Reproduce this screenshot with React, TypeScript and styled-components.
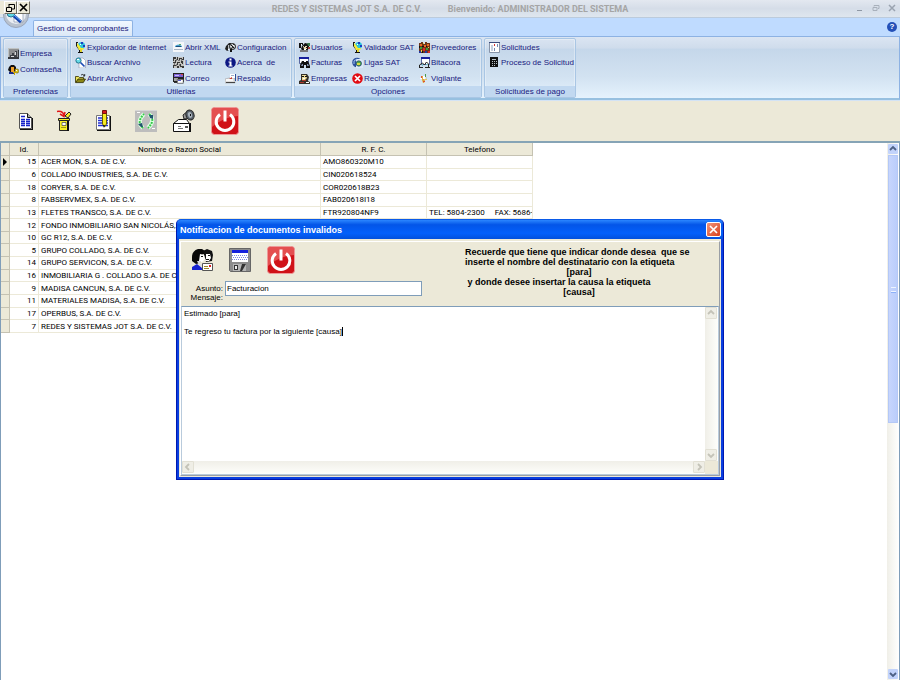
import React, { useState } from "react";
import styled, { createGlobalStyle } from "styled-components";

const Global = createGlobalStyle`
  *, *::before, *::after { box-sizing: border-box; }
  body { margin: 0; background: #fff; font-family: "Liberation Sans", Arial, sans-serif; font-size: 8px; color: #000; }
  button { font: inherit; color: inherit; padding: 0; border: 0; background: none; cursor: default; }
  svg { display: block; flex: none; }
`;

/* ---------- icons ---------- */

const Svg = ({ size = 11, box = 11, children }: { size?: number; box?: number; children: React.ReactNode }) => (
  <svg width={size} height={size} viewBox={`0 0 ${box} ${box}`} aria-hidden="true">{children}</svg>
);

const icons: Record<string, React.ReactNode> = {
  empresa: <>
    <path fill="#8d8f90" d="M0 0h11v11H0z" /><path fill="#bfc2c2" d="M0 0h11v1H1v9H0z" />
    <path fill="#33373c" d="M1 9h9V2h1v9H0V9z" /><path fill="#3e4247" d="M2 7h2V5h2v2h1V3h2v6H2z" />
    <path fill="#d9dbdb" d="M3 8h3v1H3zM7 4h1v3H7z" />
  </>,
  clave: <>
    <path fill="#111" d="M1 3l2-2h3l2 2v3L6 8H2L0 6z" /><path fill="#f0a028" d="M3 3h3v5H3z" />
    <path fill="#1f2f88" d="M1 8h5v2H1z" /><path fill="#d9c01c" stroke="#5b4d00" strokeWidth=".5" d="M7 5h3l1 2-1 2H8L7 8z" />
    <path fill="#fff" d="M8 6h1v1H8z" /><path fill="#c8a800" d="M5 8h3v1H7v2H6V9H5z" />
  </>,
  globo: <>
    <circle cx="6.500" cy="3.600" r="3.500" fill="#2fc4dc" /><path fill="#1c3fc0" d="M6 0h2v2H6zM8 3h2v2H8z" />
    <path fill="#1a1a1a" d="M1 0h2v1H2v3l3 4H4L1 4z" /><path fill="#f5ec35" d="M2 1l2 2 2 3 3 0-1 2H4L2 4z" />
    <path fill="#fff" d="M5 2h1v1H5z" /><path fill="#111" d="M4 8h3v2h1v1H3v-1h1z" /><path fill="#e4d42c" d="M5 7h2v3H5z" />
  </>,
  buscar: <>
    <path fill="#fff" stroke="#8b96ac" strokeWidth=".6" d="M4 1h4l2.500 2.500V11H4z" />
    <circle cx="3.500" cy="3.500" r="2.600" fill="#66dbe8" stroke="#23738c" /><path stroke="#1b4cb4" strokeWidth="1.700" d="M5.500 5.500l4 4" />
    <path fill="#fff" d="M2 2h2v1H2z" />
  </>,
  abrir: <>
    <path fill="#ebe45b" stroke="#333000" strokeWidth=".8" d="M.5 9.500v-6h3l1 1h4v2" />
    <path fill="#8b8614" stroke="#2a2800" strokeWidth=".8" d="M.7 9.600L3 6h7.500L8.300 9.600z" />
    <path fill="none" stroke="#111" strokeWidth=".8" d="M6 2q2-1.500 3.500.8M9.700 1v2H8" />
  </>,
  xml: <>
    <path fill="#f5f7fa" d="M0 0h11v10H0z" /><path fill="#4aa0cf" d="M2 4q3-3 7 0v1H2z" />
    <path fill="#1c4d78" d="M3 4h5v1H3z" /><path fill="#5cb26a" d="M6 2h2v1H6z" /><path fill="#a7b5c4" d="M1 7h9v1H1z" />
  </>,
  lectura: <>
    <path fill="#c4c4c0" d="M0 0h11v11H0z" />
    <path fill="#383838" d="M0 0h3v2H1v2H0zM4 0h1v3H4zM6 1h3v1H7v2H6zM10 0h1v3h-2V2h1zM2 3h1v3H0V5h2zM4 5h3v1H5v2H4zM8 4h2v3H9V6H8zM0 8h3v1H1v2H0zM4 9h2v2H4zM7 7h1v2h3v1H7zM9 10h2v1H9z" />
    <path fill="#777" d="M3 2h1v2H3zM5 3h2v1H5zM3 7h1v2H3zM6 7h1v2H6zM1 6h1v2H1zM8 2h1v2H8z" />
  </>,
  correo: <>
    <path fill="#222" d="M0 0h11v9H0z" /><path fill="#7b60d3" d="M1 1h9v3H1z" /><path fill="#c9bdf2" d="M2 2h4v1H2z" />
    <path fill="#a3a3a3" d="M1 5h4v3H1z" /><path fill="#e04848" d="M8 1h2v1H8z" /><path fill="#fff" stroke="#222" strokeWidth=".6" d="M4.300 6.300h6v4h-6z" />
    <path fill="#5a5ed0" d="M5 7h3v1H5z" /><path fill="#333" d="M1 9h3v1H1z" />
  </>,
  config: <>
    <path fill="#222" d="M1 4l3-3h2v2H4v5L2 9 0 7z" /><path fill="#b8bcc0" d="M3 3h2v4H3z" />
    <circle cx="7.500" cy="4.500" r="3" fill="#d4d7da" stroke="#111" /><path stroke="#111" d="M6 3l3 3M9 2L6 8" />
    <path fill="#111" d="M5 7h2v3H5z" /><path fill="#fff" d="M8 3h1v1H8zM3 7h1v1H3z" />
  </>,
  info: <>
    <circle cx="5.500" cy="5.500" r="5.300" fill="#0c1783" /><path fill="#fff" d="M4.500 1.500h2v2h-2zM3.500 4.500h3v4h1v1h-4v-1h1v-3h-1z" />
  </>,
  respaldo: <>
    <path fill="#dedede" stroke="#9a9a9a" strokeWidth=".5" d="M0 6l4-1 6 0v5H0z" /><path fill="#f9f9f9" d="M1 6h7v2H1z" />
    <path fill="#444" d="M1 9h9v1H1z" /><path fill="#2b4d9b" d="M10 1h1v7h-1z" /><path fill="#fff" d="M5 1h5v4H5z" />
    <path fill="#c43b31" d="M4 6l3-2v2z" /><path fill="#9db0ca" d="M6 2h3v1H6z" />
  </>,
  usuarios: <>
    <path fill="#111" d="M0 1h4v2H2v3H0zM6 1l4 1v4L8 9H4L2 7l1-3z" /><path fill="#e7d8b0" d="M4 4h4v3H5z" />
    <path fill="#111" d="M5 4h1v1H5zM7 5h1v1H7z" /><path fill="#397a4c" d="M8 1h3v3H9z" /><path fill="#a83a35" d="M9 5h2v2H9z" />
    <path fill="#777" d="M1 8h8v2H1z" /><path fill="#fff" d="M2 2h1v1H2zM5 7h2v1H5z" />
  </>,
  facturas: <>
    <path fill="#fff" stroke="#34448b" strokeWidth=".8" d="M.5.5h9v6h-9z" /><path fill="#17209b" d="M0 0h10v2H0z" />
    <path fill="#111" d="M3 4h2v1h2V4h2l2 5v2H7V8H5v3H1V8z" /><path fill="#8391af" d="M3 7h1v2H2zM8 7h1l1 2H8z" />
  </>,
  empresas: <>
    <path fill="#343029" d="M2 1h6l2 3-1 4 2 1v2H0V8l2-1z" /><path fill="#eddb98" d="M3 2h4l1 3-2 2H3z" />
    <path fill="#111" d="M3 3h2v1H3zM6 3h2v1H6z" /><path fill="#ac392e" d="M3 7h4v1H3zM1 9h4v1H1z" /><path fill="#fff" d="M7 9h3v1H7zM4 5h2v1H4z" />
  </>,
  ligas: <>
    <circle cx="5" cy="5.500" r="4.800" fill="#2d519e" /><path fill="#dce9f8" d="M4 2h5l2 2v7H4z" />
    <circle cx="6.800" cy="6.500" r="2.700" fill="#55a64b" stroke="#18396f" strokeWidth=".7" /><path fill="#d8dc44" d="M5 6h3v2H5z" />
    <path fill="none" stroke="#9fc2ec" d="M2 7V4l3-2" />
  </>,
  rechazo: <>
    <circle cx="5.500" cy="5.500" r="5.300" fill="#e20c12" /><path stroke="#fff" strokeWidth="1.700" d="M3 3l5 5M8 3L3 8" />
  </>,
  proveedores: <>
    <path fill="#6d3519" d="M0 1h2V0h2v2h2V0h2v1h3v10H0z" /><path fill="#e96a26" d="M1 2h2v2H1zM5 3h2v2H5zM8 2h2v2H8z" />
    <path fill="#37a13d" d="M1 5h2v2H1zM7 6h2v2H7z" /><path fill="#dc2828" d="M4 6h2v3H4zM9 9h2v2H9z" />
    <path fill="#f1d24c" d="M2 8h1v2H2zM4 1h1v1H4zM9 5h1v1H9z" /><path fill="#2436a0" d="M0 9h2v2H0zM6 9h2v2H6z" /><path fill="#111" d="M3 4h2v1H3zM3 9h1v2H3zM7 4h1v1H7zM0 4h1v2H0z" />
  </>,
  bitacora: <>
    <path fill="#fff" stroke="#34448b" strokeWidth=".8" d="M2.500.5h8v7h-8z" /><path fill="#17209b" d="M2 0h9v2H2z" />
    <path fill="none" stroke="#222" d="M.5 10V8l3-2 2 2 2-3 2 2v3M0 10.500h4M6 10.500h5" /><path fill="#74c4cf" d="M3 7h1v2H3zM7 7h2v1H7z" />
  </>,
  vigilante: <>
    <path fill="#e0a83a" d="M3 3h1l1 2 1 3-1 2H4L3 7z" /><path fill="#dc4e33" d="M2 3h1v2H2zM4 8h2v1H4z" />
    <path fill="#fff" d="M4 3h2v3H4zM1 5h2v1H1z" /><path fill="#4c9a4d" d="M6 1h1v3H6z" /><path fill="#e8c85a" d="M6 6h2v1H6z" /><path fill="#c9ccd0" d="M7 4h1v2H7z" />
  </>,
  solicitudes: <>
    <path fill="#fff" stroke="#707c94" strokeWidth=".8" d="M.5.5h10v10H.5z" /><path fill="#3a4b7c" d="M0 0h11v1H0z" />
    <path fill="#c7d0df" d="M2 3h2v6H2z" /><path fill="#d12f2f" d="M5 2h1v2H5z" /><path fill="#7489b4" d="M8 2h1v3H8zM5 6h1v3H5z" />
  </>,
  proceso: <>
    <path fill="#111" d="M1 0h8v10H1z" /><path fill="#b9c1c7" d="M3 2h4v1H3zM3 4h1v1H3zM5 4h1v1H5zM7 4h1v1H7zM3 6h1v1H3zM5 6h1v1H5zM7 6h1v1H7zM3 8h1v1H3zM5 8h1v1H5z" />
  </>,
};

const DocIcon = () => (
  <Svg size={20} box={20}>
    <path fill="#111" d="M4 19v-1h12V7h1v12z" /><path fill="#fff" stroke="#555" d="M3.500 2.500h8l4 4v11h-12z" />
    <path fill="#aaa" stroke="#111" d="M11.500 2.500v4h4" />
    <path stroke="#1420c8" strokeWidth="1.400" d="M5 5.500h4M5 8.500h4m1 0h4M5 10.500h4m1 0h4M5 12.500h4m1 0h4M5 14.500h4m1 0h4" />
  </Svg>
);
const TrashIcon = () => (
  <Svg size={22} box={22}>
    <path fill="none" stroke="#e11616" strokeWidth="1.500" d="M2 1.500q6-1 7 4M5 4l4 2.500L10 2" />
    <path fill="#f8ef26" stroke="#222" d="M10 6l4-4 2 2-3 4zM3.500 8.500h11v2h-11zM4.500 10.500h9v10h-9z" />
    <path fill="#fff" stroke="#444" strokeWidth=".7" d="M7 12.500h4v3H7z" /><path fill="#111" d="M12 11h2v10h-2z" /><path fill="#a29b16" d="M6 17h5v1H6z" />
  </Svg>
);
const PencilDocIcon = () => (
  <Svg size={22} box={22}>
    <path fill="#111" d="M4 21v-1h13V6h1v15z" /><path fill="#fff" stroke="#777" d="M3.500 5.500h13v14h-13z" />
    <path stroke="#222fd0" strokeWidth="1.300" d="M5 8h10M5 10.500h10M5 13h10M5 15.500h10" />
    <path fill="#f6ea22" stroke="#665f00" d="M9.500 3h4v11l-2 3-2-3z" /><path fill="#d81a1a" stroke="#711" d="M9.500.5h4v3h-4z" /><path fill="#111" d="M10 15h2l-1 3z" />
  </Svg>
);
const RecycleIcon = () => (
  <Svg size={22} box={22}>
    <path fill="#bdbdbd" d="M0 0h22v22H0z" /><path fill="#d7d7d7" d="M0 0h22v1H0z" />
    <path fill="none" stroke="#dfffe2" strokeWidth="4" d="M8 18q-7-6 1-14M14 4q7 6-1 14" />
    <path fill="none" stroke="#34c948" strokeWidth="2" strokeDasharray="2 1" d="M8 18q-7-6 1-14M14 4q7 6-1 14" />
    <path fill="#22566e" d="M3 14l4-1 1 4H6zM14 5l4 0 0 4-3-1z" /><path fill="#fff" d="M2 2h3v1H2zM17 18h3v1h-3z" />
  </Svg>
);
const HornIcon = () => (
  <Svg size={24} box={24}>
    <path fill="#fff" stroke="#111" d="M1.500 14.500l5-4h8l3 4v8h-16zM1.500 14.500h16" /><path fill="#111" d="M18 14h1v9H3v-1h15z" />
    <path fill="#555" d="M13 17h3v2h-3z" /><path stroke="#777" d="M6 19.500h5M6 17.500h3" />
    <path fill="#999" stroke="#222" d="M11 6l5-4 4 7-8 1z" /><ellipse cx="18" cy="6" rx="4" ry="5" transform="rotate(-20 18 6)" fill="#59626b" stroke="#222" />
    <ellipse cx="18" cy="6" rx="2" ry="3" fill="#a7b1bb" transform="rotate(-20 18 6)" /><path fill="#111" d="M18 5h1v2h-1z" />
  </Svg>
);
const PowerIcon = () => (
  <Svg size={28} box={28}>
    <rect x=".5" y=".5" width="27" height="27" rx="3" fill="#d01218" stroke="#e99" />
    <path fill="#ec6a68" opacity=".7" d="M1 3q0-2 2-2h22q2 0 2 2v6Q12 10 1 20z" />
    <path fill="none" stroke="#fff" strokeWidth="3" d="M9 7.500a8.800 8.800 0 1 0 10 0" /><path stroke="#fff" strokeWidth="3" d="M14 3.500v11" />
  </Svg>
);
const FacesIcon = () => (
  <Svg size={24} box={24}>
    <path fill="#090909" d="M1 9q0-6 6-8h4l3 2-1 3-3 1-1 8-4 1-4-3z" /><path fill="#111" d="M12 3l4-2 5 2 1 4-1 6-6 1z" />
    <path fill="#fff" d="M9 6l4 1 1 4-3 3-3-1zM15 6h4l1 4-2 3h-4l1-3z" /><path fill="#ddd" d="M6 13h3v3l3 1-3 2z" />
    <path fill="#111" d="M10 8h2v1h-2zM17 7h2v1h-2zM15 11h3v1h-3z" /><path fill="#1622d0" d="M1 19l5-3 5 4v2H1z" />
    <path fill="#fff" stroke="#555" d="M11.500 15.500h10v7h-10z" /><path fill="#d22" d="M18 17h2v2h-2z" /><path stroke="#a08a28" d="M13 18.500h4M13 20.500h5" />
  </Svg>
);
const FloppyIcon = () => (
  <Svg size={24} box={24}>
    <path fill="#8c8c8c" stroke="#666" d="M1.500.5h21v23h-20l-1-1z" /><path fill="#fff" d="M4 2h16v12H4z" /><path fill="#1420dc" d="M4 2h16v3H4z" />
    <path stroke="#7d87e0" strokeDasharray="1 1" d="M4 7.500h16M5 9.500h15M4 11.500h16" /><path fill="#b6b6b6" d="M5 16h13v7H5z" />
    <path fill="#333" d="M6 17h4v5H6zM14 16h4l-4 7h-2z" /><path fill="#efefef" d="M7 18h2v3H7z" />
  </Svg>
);
const OrbArt = () => (
  <svg width="26" height="26" viewBox="0 0 26 26" aria-hidden="true">
    <circle cx="13" cy="13" r="12.500" fill="#b9c2cf" stroke="#9aa6ba" /><circle cx="13" cy="12" r="10" fill="#e9edf3" />
    <path fill="#fff" stroke="#8a97ae" strokeWidth=".7" d="M11 6h7l2 2v12h-9z" />
    <circle cx="8" cy="11" r="4" fill="#5fd9e5" stroke="#287a96" /><path stroke="#1545b0" strokeWidth="3" d="M11 14l7 6" /><path stroke="#77b7ff" d="M11 13l7 6" />
  </svg>
);
const Chevron = ({ dir, color }: { dir: "up" | "down" | "left" | "right"; color: string }) => {
  const d = { up: "M1 5l3-3 3 3", down: "M1 3l3 3 3-3", left: "M5 1L2 4l3 3", right: "M3 1l3 3-3 3" }[dir];
  return <svg width="8" height="8" viewBox="0 0 8 8" aria-hidden="true"><path d={d} fill="none" stroke={color} strokeWidth="1.800" /></svg>;
};

/* ---------- shell ---------- */

const Shell = styled.div`
  min-height: 100vh; display: flex; flex-direction: column; position: relative;
`;
const TitleBar = styled.header`
  height: 18px; flex: none; display: flex; align-items: center; justify-content: center; gap: 26px;
  position: relative;
  background: linear-gradient(#e3e8f0, #d5dde8 50%, #dfe6ee); border-bottom: 1px solid #bccbdc;
  font-family: Roboto, sans-serif; font-size: 9px; font-weight: 700; color: #a5a5a5; white-space: pre;
`;
const Caption = styled.span``;
const WindowButtons = styled.div`
  position: absolute; right: 3px; top: 3px; display: flex; gap: 6px;
  button { width: 10px; height: 10px; }
`;
const Orb = styled.button`
  position: absolute; left: 3px; top: 2px; z-index: 2; width: 26px; height: 26px;
`;
const MdiButtons = styled.div`
  position: absolute; left: 0; top: 1px; z-index: 3; display: flex; padding-left: 4px; background: #ece9d8;
`;
const MdiButton = styled.button`
  width: 13px; height: 13px; display: grid; place-items: center; background: #ece9d8;
  border: 1px solid; border-color: #fff #716f64 #716f64 #fff;
`;
const TabRow = styled.nav`
  height: 18px; flex: none; display: flex; align-items: flex-end; justify-content: space-between;
  padding: 0 3px 0 33px; background: #bfdbff;
`;
const Tab = styled.button`
  height: 16px; padding: 0 3px; background: linear-gradient(#f0f7ff, #dce8f6);
  border: 1px solid #8db2e3; border-bottom: 0; border-radius: 2px 2px 0 0; color: #1a1a80;
`;
const HelpButton = styled.button`
  width: 10px; height: 10px; margin-bottom: 4px; border-radius: 50%; background: #2450b8; color: #fff;
  font-size: 8px; line-height: 10px; font-weight: 700;
`;
const Ribbon = styled.section`
  flex: none; display: flex; gap: 2px; padding: 1px 2px 0; border: 1px solid #8db2e3; border-bottom: 2px solid #97c0e0;
  background: linear-gradient(#dbe5f2, #cfdcec 18%, #c5d7ea 20%, #d2e2f1 65%, #e5f2fd);
`;
const Group = styled.section<{ $width: number }>`
  width: ${p => p.$width}px; height: 60px; flex: none; display: flex; flex-direction: column;
  border: 1px solid #a9c6e4; border-radius: 2px; box-shadow: inset 0 0 0 1px #ffffff55;
`;
const GroupBody = styled.div<{ $cols: string; $rows: number }>`
  flex: 1; min-height: 0; display: grid; grid-auto-flow: column; grid-template-columns: ${p => p.$cols};
  grid-template-rows: repeat(${p => p.$rows}, 1fr); padding: ${p => (p.$rows === 2 ? "6px 0 9px 4px" : "1px 0 0 4px")};
`;
const GroupName = styled.h2`
  margin: 0; height: 11px; background: #c1d8f0; color: #1a1a80; font-size: 8px; line-height: 11px; font-weight: 400; text-align: center;
`;
const Command = styled.button`
  display: flex; align-items: center; gap: 1px; color: #1a1a80; white-space: pre; text-align: left; min-width: 0;
`;

type GroupData = { name: string; width: number; cols: string; rows: number; items: [string, string][] };
const groups: GroupData[] = [
  { name: "Preferencias", width: 65, cols: "1fr", rows: 2, items: [["empresa", "Empresa"], ["clave", "Contraseña"]] },
  { name: "Utilerias", width: 222, cols: "98px 52px 1fr", rows: 3, items: [
    ["globo", "Explorador de Internet"], ["buscar", "Buscar Archivo"], ["abrir", "Abrir Archivo"],
    ["xml", "Abrir XML"], ["lectura", "Lectura"], ["correo", "Correo"],
    ["config", "Configuracion"], ["info", "Acerca  de"], ["respaldo", "Respaldo"]] },
  { name: "Opciones", width: 188, cols: "53px 67px 1fr", rows: 3, items: [
    ["usuarios", "Usuarios"], ["facturas", "Facturas"], ["empresas", "Empresas"],
    ["globo", "Validador SAT"], ["ligas", "Ligas SAT"], ["rechazo", "Rechazados"],
    ["proveedores", "Proveedores"], ["bitacora", "Bitacora"], ["vigilante", "Vigilante"]] },
  { name: "Solicitudes de pago", width: 92, cols: "1fr", rows: 3, items: [["solicitudes", "Solicitudes"], ["proceso", "Proceso de Solicitud"]] },
];

const Toolbar = styled.div`
  flex: none; height: 43px; display: flex; align-items: center; padding-left: 16px;
  background: #ece9d8; border-top: 1px solid #d3e3f5; border-bottom: 2px solid #86a4b6;
`;
const Tool = styled.button<{ $width: number }>`
  width: ${p => p.$width}px; display: grid; justify-items: start;
`;

/* ---------- grid ---------- */

const Workspace = styled.main`
  flex: 1; display: flex; align-items: stretch; border-left: 1px solid #7f9db9; border-right: 1px solid #7f9db9; background: #fff;
`;
const GridArea = styled.div`
  flex: 1; min-width: 0;
`;
const Grid = styled.table`
  table-layout: fixed; width: 532px; height: 190px; border-collapse: separate; border-spacing: 0;
  font-family: Roboto, sans-serif; line-height: 9px;
  th, td { padding: 0 2px; border-right: 1px solid #ece9d8; border-bottom: 1px solid #ece9d8; white-space: pre; overflow: hidden; font-weight: 400; text-align: left; }
  thead th { height: 13px; text-align: center; background: #ece9d8; border-right-color: #c5c2b2; border-bottom-color: #c5c2b2; }
  tbody th { background: #ece9d8; padding: 0; border-right-color: #c5c2b2; border-bottom-color: #c5c2b2; }
  td.id { text-align: right; }
`;
const clients: [number, string, string, string][] = [
  [15, "ACER MON, S.A. DE C.V.", "AMO860320M10", ""],
  [6, "COLLADO INDUSTRIES, S.A. DE C.V.", "CIN020618524", ""],
  [18, "CORYER, S.A. DE C.V.", "COR020618B23", ""],
  [8, "FABSERVMEX, S.A. DE C.V.", "FAB020618I18", ""],
  [13, "FLETES TRANSCO, S.A. DE C.V.", "FTR920804NF9", "TEL: 5804-2300     FAX: 5686-"],
  [12, "FONDO INMOBILIARIO SAN NICOLÁS,", "", ""],
  [10, "GC R12, S.A. DE C.V.", "", ""],
  [5, "GRUPO COLLADO, S.A. DE C.V.", "", ""],
  [14, "GRUPO SERVICON, S.A. DE C.V.", "", ""],
  [16, "INMOBILIARIA G . COLLADO S.A. DE C", "", ""],
  [9, "MADISA CANCUN, S.A. DE C.V.", "", ""],
  [11, "MATERIALES MADISA, S.A. DE C.V.", "", ""],
  [17, "OPERBUS, S.A. DE C.V.", "", ""],
  [7, "REDES Y SISTEMAS JOT S.A. DE C.V.", "", ""],
];
const PageScroll = styled.div`
  width: 12px; flex: none; display: flex; flex-direction: column;
  background: linear-gradient(90deg, #f0efe8, #fff);
`;
const ScrollEnd = styled.button`
  width: 10px; height: 10px; margin: 1px; display: grid; place-items: center; border-radius: 1px; background: #c2d3fb;
`;
const PageThumb = styled.div`
  height: 268px; margin: 0 1px; display: grid; place-items: center; border: 1px solid #b4c8f6; background: linear-gradient(90deg, #c6d5fd, #bacdfb);
`;
const Grip = styled.span`
  width: 5px; height: 5px; border: solid #eef4fe; border-width: 1px 0; box-shadow: 0 1px #8cb0f8;
`;
const Filler = styled.span`
  flex: 1;
`;

/* ---------- dialog ---------- */

const Dialog = styled.section`
  position: absolute; left: 176px; top: 219px; width: 548px; display: flex; flex-direction: column;
  padding: 0 2px 2px; border-radius: 5px 5px 0 0; background: #0a3fe0; border: 1px solid #0018b0; border-top-color: #0a5ae8;
`;
const DialogTitle = styled.header`
  height: 19px; margin: 0 -2px; padding: 0 3px; display: flex; align-items: center; justify-content: space-between;
  border-radius: 4px 4px 0 0; color: #fff; background: linear-gradient(#2b86ff, #0355e8 25%, #0360fb 70%, #0250dc);
  h1 { margin: 0; font-size: 9px; font-weight: 700; }
`;
const CloseButton = styled.button`
  width: 15px; height: 15px; display: grid; place-items: center; margin-right: -1px;
  border: 1px solid #fff; border-radius: 2px; background: linear-gradient(135deg, #f0957a, #d8401c);
`;
const DialogBody = styled.div`
  padding: 2px 1px 1px; background: #ece9d8;
`;
const Frame = styled.div`
  border: 1px solid; border-color: #fff #9a9fa6 #9a9fa6 #fff;
`;
const DialogTop = styled.div`
  height: 64px; display: flex; justify-content: space-between;
`;
const DialogForm = styled.div`
  display: flex; flex-direction: column; padding-top: 3px;
`;
const DialogTools = styled.div`
  display: flex; align-items: center; height: 29px; padding-left: 10px;
`;
const Field = styled.div`
  display: flex; align-items: flex-start; margin-top: 7px; gap: 2px;
  label { display: block; text-align: right; width: 42px; line-height: 9px; }
  input { width: 197px; height: 15px; padding: 0 1px; border: 1px solid #7f9db9; background: #fff; font: inherit; outline: 0; }
`;
const Labels = styled.div`
  padding-top: 3px;
`;
const Note = styled.p`
  margin: 5px 26px 0 0; width: 228px; font-size: 9px; line-height: 10px; font-weight: 700;
  white-space: pre;
  span { display: block; text-align: center; }
  span.left { text-align: left; }
`;
const Editor = styled.div`
  display: grid; grid-template-columns: 1fr 13px; grid-template-rows: 154px 13px; position: relative;
  border: 1px solid #b9cbdc; border-top-color: #7f9db9; background: #ece9d8;
  textarea { display: block; width: 100%; height: 100%; resize: none; border: 0; outline: 0; padding: 2px 2px; background: #fff; overflow: hidden; font: inherit; line-height: 9px; color: #000; }
`;
const Caret = styled.span`
  position: absolute; left: 160px; top: 20px; width: 1px; height: 9px; background: #000;
`;
const Track = styled.div<{ $row?: boolean }>`
  display: flex; justify-content: space-between; flex-direction: ${p => (p.$row ? "row" : "column")};
  background: linear-gradient(${p => (p.$row ? "180deg" : "90deg")}, #f0efe8, #fefefb);
  button { width: 12px; height: 12px; display: grid; place-items: center; background: #efeee6; border: 1px solid #e2e0d4; border-radius: 1px; }
`;

export default function App() {
  const [subject, setSubject] = useState("Facturacion");
  const [message, setMessage] = useState("Estimado [para]\n\nTe regreso tu factura por la siguiente [causa]");
  return (
    <Shell>
      <Global />
      <TitleBar>
        <Caption>REDES Y SISTEMAS JOT S.A. DE C.V.</Caption>
        <Caption>Bienvenido: ADMINISTRADOR DEL SISTEMA</Caption>
        <WindowButtons>
          <button aria-label="Minimizar"><svg width="10" height="10" aria-hidden="true"><path d="M2 7.500h5" stroke="#8f98a5" /></svg></button>
          <button aria-label="Restaurar"><svg width="10" height="10" aria-hidden="true"><path d="M3 3.500V2.500h5v3H7M2 4.500h4v3H2z" fill="none" stroke="#a8b0bb" /></svg></button>
          <button aria-label="Cerrar"><svg width="10" height="10" aria-hidden="true"><path d="M2 2l6 6M8 2L2 8" stroke="#9aa3b0" strokeWidth="1.500" /></svg></button>
        </WindowButtons>
      </TitleBar>
      <Orb aria-label="Menú"><OrbArt /></Orb>
      <MdiButtons>
        <MdiButton aria-label="Restaurar ventana"><svg width="9" height="9" aria-hidden="true"><path d="M3 1.500h5.500V6H6M.5 4.500h5v4h-5zM3 1v3" fill="none" stroke="#000" /></svg></MdiButton>
        <MdiButton aria-label="Cerrar ventana"><svg width="9" height="9" aria-hidden="true"><path d="M1 1l7 7M8 1L1 8" stroke="#000" strokeWidth="1.700" /></svg></MdiButton>
      </MdiButtons>
      <TabRow>
        <Tab>Gestion de comprobantes</Tab>
        <HelpButton aria-label="Ayuda">?</HelpButton>
      </TabRow>
      <Ribbon>
        {groups.map(g => (
          <Group key={g.name} $width={g.width}>
            <GroupBody $cols={g.cols} $rows={g.rows}>
              {g.items.map(([icon, label]) => (
                <Command key={label}><Svg>{icons[icon]}</Svg>{label}</Command>
              ))}
            </GroupBody>
            <GroupName>{g.name}</GroupName>
          </Group>
        ))}
      </Ribbon>
      <Toolbar>
        <Tool $width={39} aria-label="Nuevo"><DocIcon /></Tool>
        <Tool $width={38} aria-label="Eliminar"><TrashIcon /></Tool>
        <Tool $width={42} aria-label="Editar"><PencilDocIcon /></Tool>
        <Tool $width={37} aria-label="Actualizar"><RecycleIcon /></Tool>
        <Tool $width={39} aria-label="Notificar"><HornIcon /></Tool>
        <Tool $width={28} aria-label="Salir"><PowerIcon /></Tool>
      </Toolbar>
      <Workspace>
        <GridArea>
          <Grid>
            <colgroup><col width="9" /><col width="29" /><col width="282" /><col width="106" /><col width="106" /></colgroup>
            <thead>
              <tr><th /><th>Id.</th><th>Nombre o Razon Social</th><th>R. F. C.</th><th>Telefono</th></tr>
            </thead>
            <tbody>
              {clients.map(([id, name, rfc, tel], i) => (
                <tr key={id}>
                  <th>{i === 0 && <svg width="8" height="8" viewBox="0 0 8 8" aria-label="Fila actual"><path d="M2 0l4 4-4 4z" /></svg>}</th>
                  <td className="id">{id}</td><td>{name}</td><td>{rfc}</td><td>{tel}</td>
                </tr>
              ))}
            </tbody>
          </Grid>
        </GridArea>
        <PageScroll>
          <ScrollEnd aria-label="Subir"><Chevron dir="up" color="#4d6185" /></ScrollEnd>
          <PageThumb><Grip /></PageThumb>
          <Filler />
          <ScrollEnd aria-label="Bajar"><Chevron dir="down" color="#4d6185" /></ScrollEnd>
        </PageScroll>
      </Workspace>
      <Dialog role="dialog" aria-labelledby="dialog-title">
        <DialogTitle>
          <h1 id="dialog-title">Notificacion de documentos invalidos</h1>
          <CloseButton aria-label="Cerrar"><svg width="9" height="9" aria-hidden="true"><path d="M1 1l7 7M8 1L1 8" stroke="#fff" strokeWidth="1.700" /></svg></CloseButton>
        </DialogTitle>
        <DialogBody>
          <Frame>
            <DialogTop>
              <DialogForm>
                <DialogTools>
                  <Tool $width={37} aria-label="Enviar"><FacesIcon /></Tool>
                  <Tool $width={39} aria-label="Guardar"><FloppyIcon /></Tool>
                  <Tool $width={28} aria-label="Salir"><PowerIcon /></Tool>
                </DialogTools>
                <Field>
                  <Labels>
                    <label htmlFor="subject">Asunto:</label>
                    <label htmlFor="message">Mensaje:</label>
                  </Labels>
                  <input id="subject" value={subject} onChange={e => setSubject(e.target.value)} />
                </Field>
              </DialogForm>
              <Note>
                <span className="left">Recuerde que tiene que indicar donde desea  que se</span>
                <span className="left">inserte el nombre del destinatario con la etiqueta</span>
                <span>[para]</span>
                <span className="left"> y donde desee insertar la causa la etiqueta</span>
                <span>[causa]</span>
              </Note>
            </DialogTop>
            <Editor>
              <textarea id="message" value={message} onChange={e => setMessage(e.target.value)} />
              <Caret />
              <Track>
                <button aria-label="Subir mensaje"><Chevron dir="up" color="#c4c3b8" /></button>
                <button aria-label="Bajar mensaje"><Chevron dir="down" color="#c4c3b8" /></button>
              </Track>
              <Track $row>
                <button aria-label="Mensaje a la izquierda"><Chevron dir="left" color="#c4c3b8" /></button>
                <button aria-label="Mensaje a la derecha"><Chevron dir="right" color="#c4c3b8" /></button>
              </Track>
            </Editor>
          </Frame>
        </DialogBody>
      </Dialog>
    </Shell>
  );
}
